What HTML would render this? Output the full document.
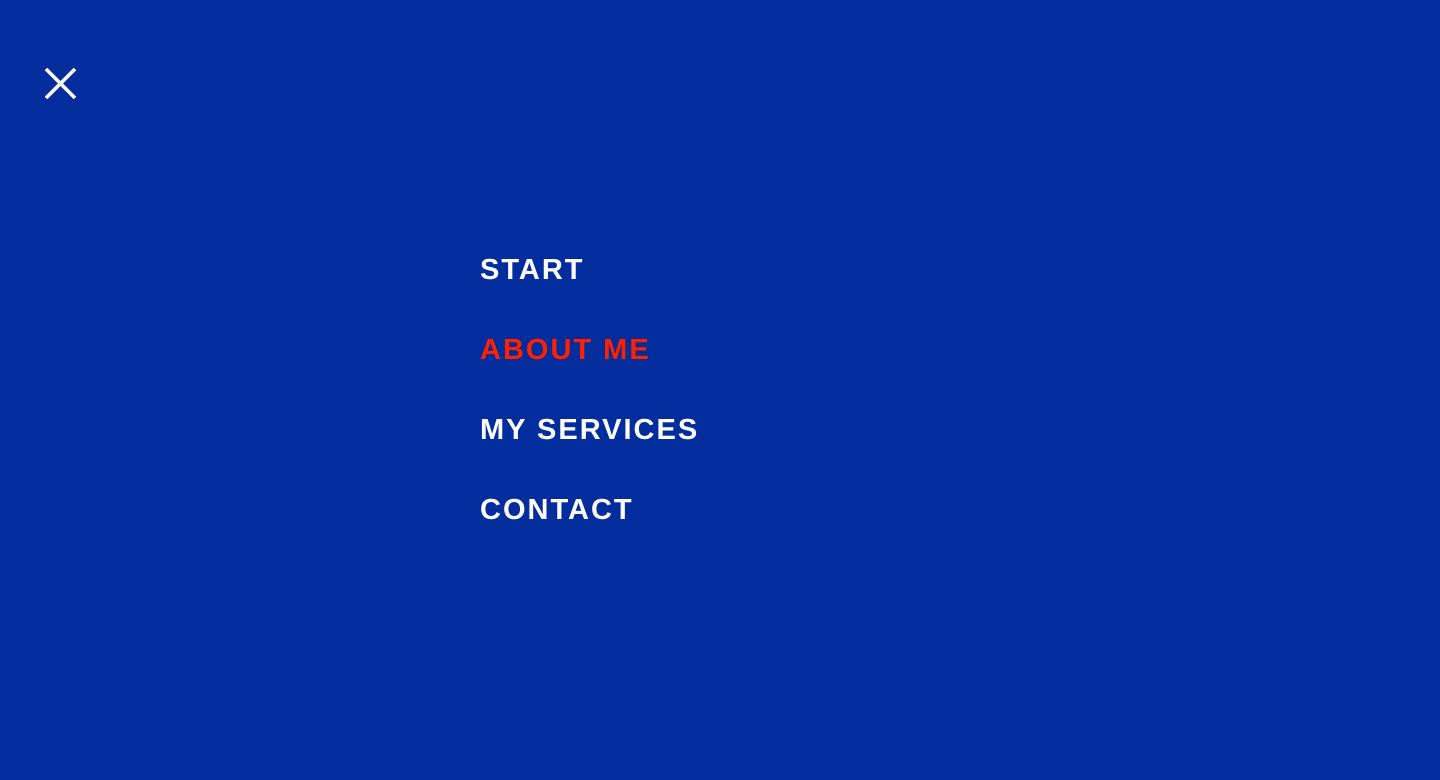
<!DOCTYPE html>
<html><head><meta charset="utf-8"><style>
html,body{margin:0;padding:0;width:1440px;height:780px;background:#032c9c;overflow:hidden;font-family:"Liberation Sans",sans-serif}
.x{position:absolute;left:44px;top:67px}
a{position:absolute;left:480px;font-weight:bold;font-size:29px;letter-spacing:2px;color:#fff;text-decoration:none;line-height:1}
</style></head><body>
<svg class="x" width="33" height="33" viewBox="0 0 33 33"><path d="M2 2L31 31M31 2L2 31" stroke="#fff" stroke-width="3.6"/></svg>
<a style="top:256px">START</a>
<a style="top:336px;color:#ff2000">ABOUT ME</a>
<a style="top:416px">MY SERVICES</a>
<a style="top:496px">CONTACT</a>
</body></html>
